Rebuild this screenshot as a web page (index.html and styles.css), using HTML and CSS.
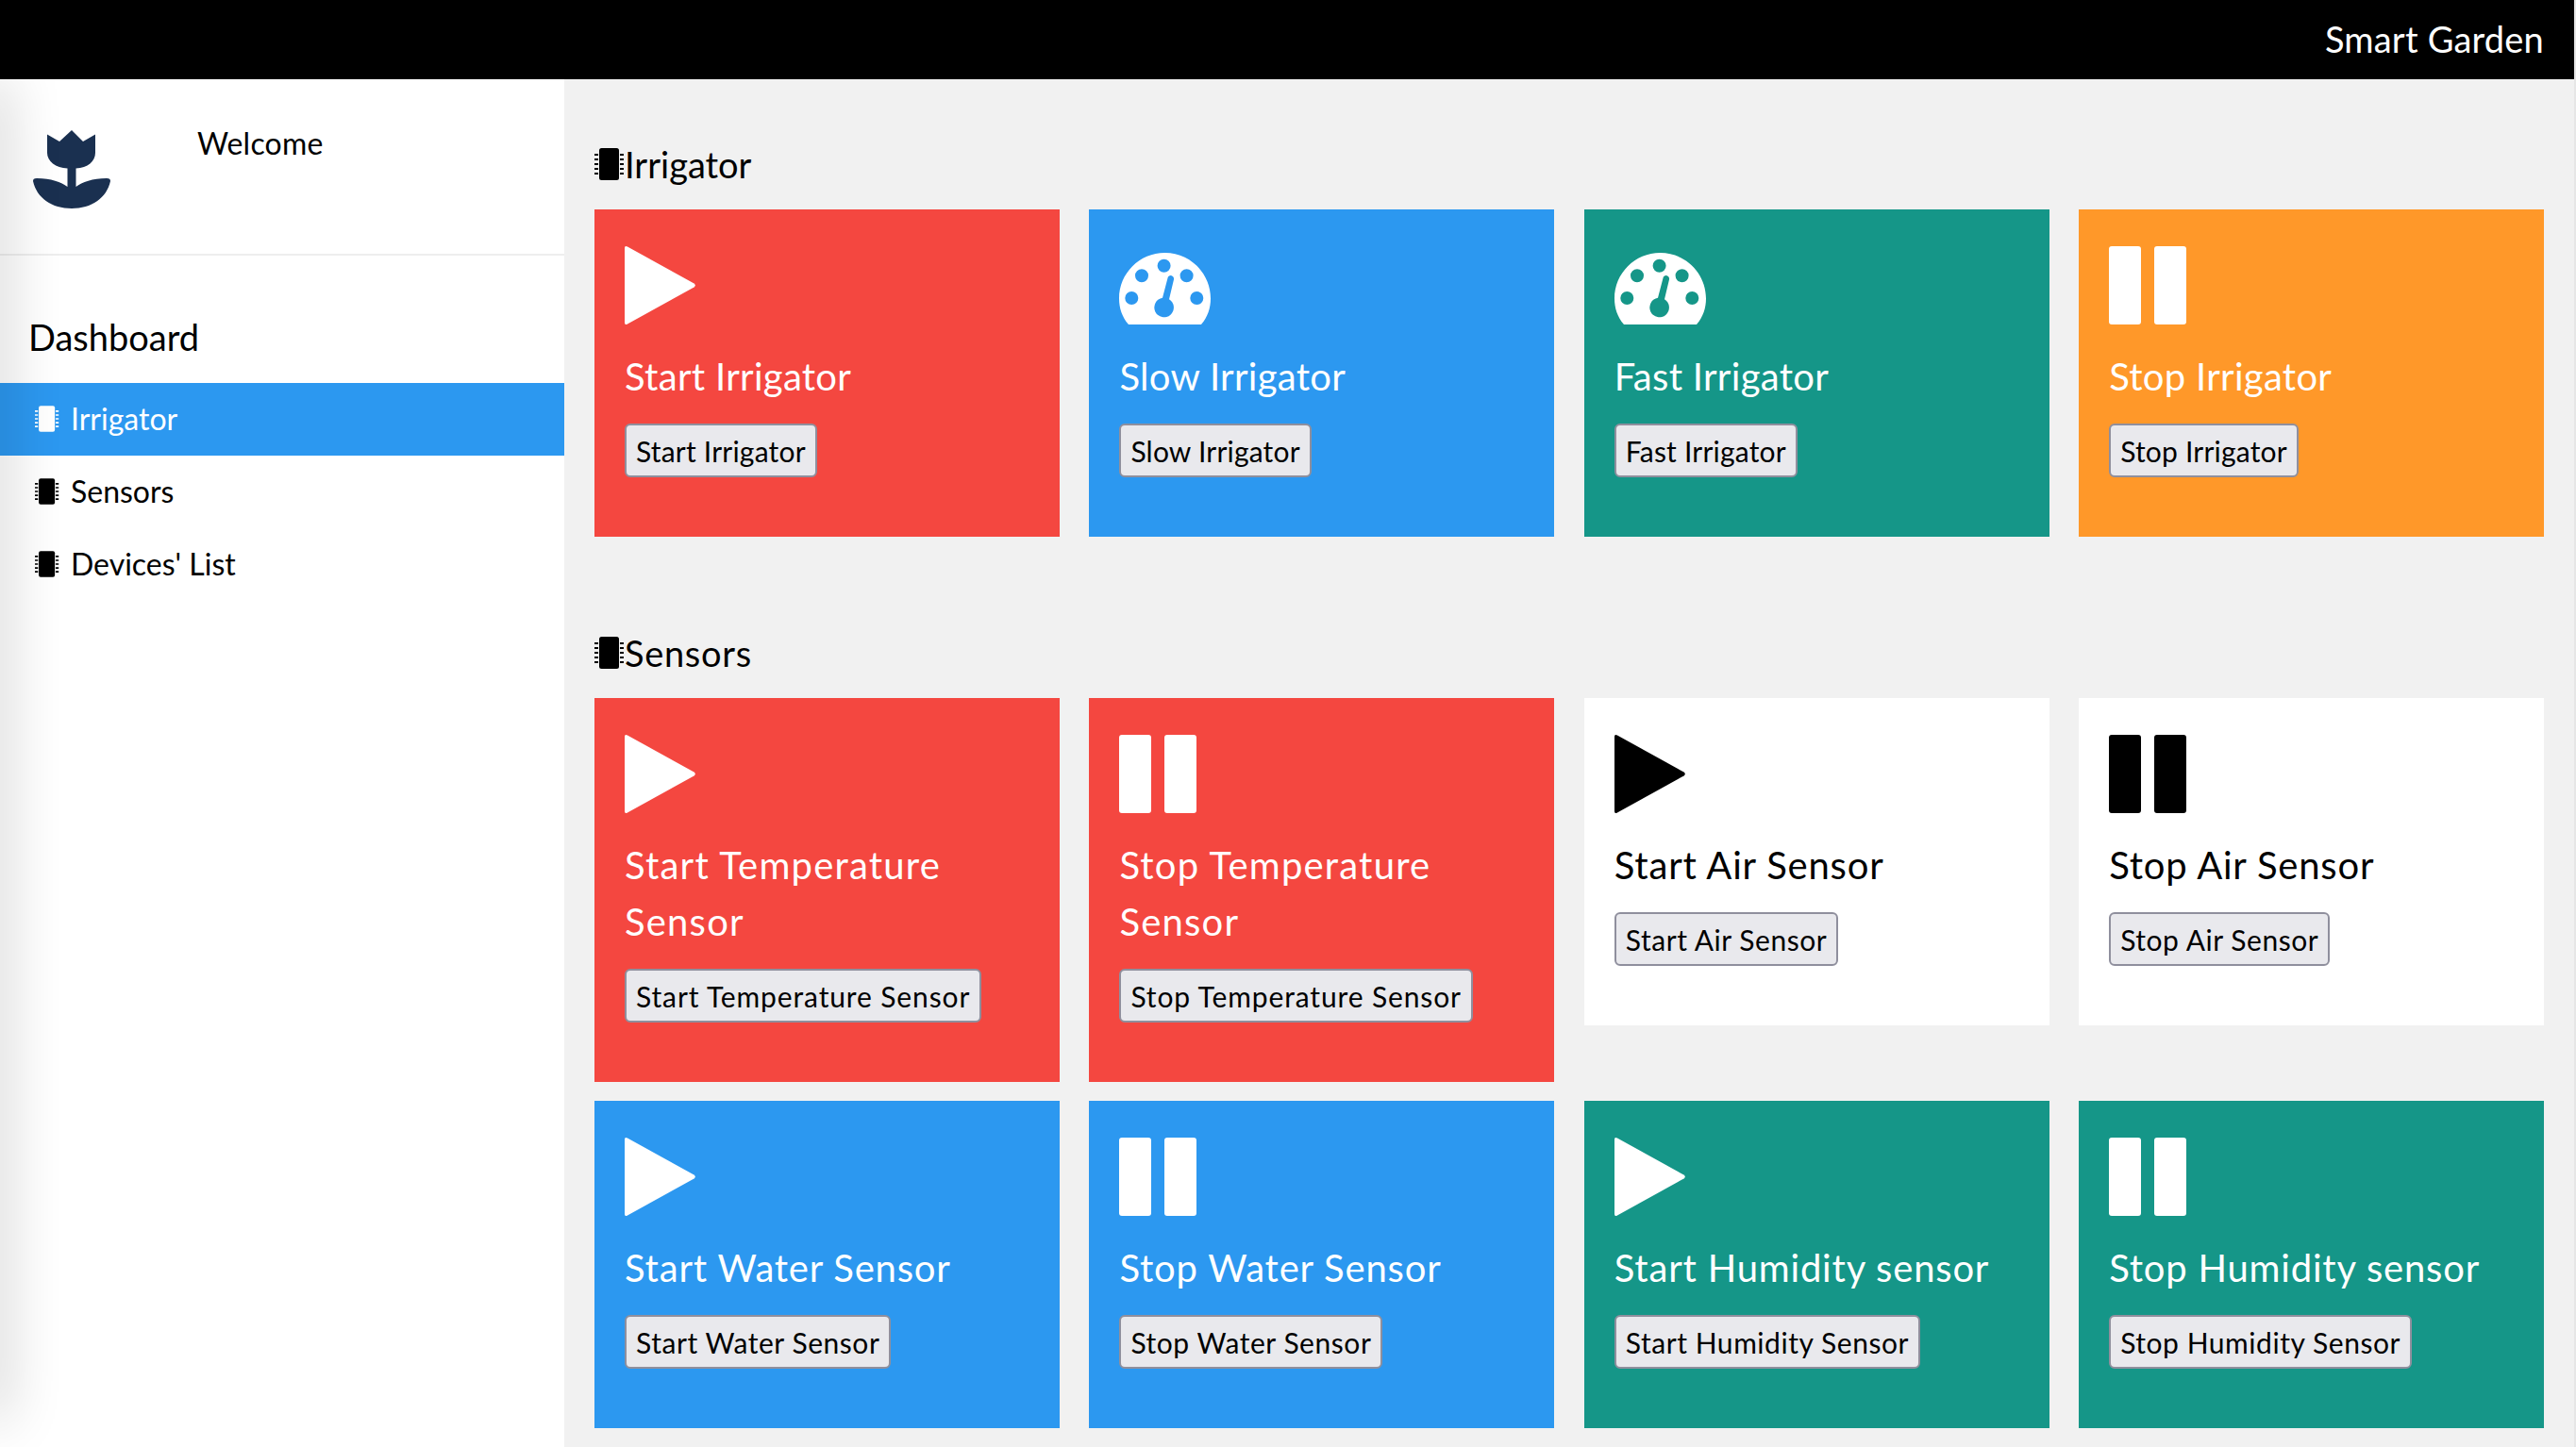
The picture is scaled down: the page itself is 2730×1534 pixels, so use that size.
FILE: index.html
```html
<!DOCTYPE html>
<html lang="en">
<head>
    <meta charset="UTF-8">
    <title>Smart Garden</title>
    <link rel="stylesheet" href="styles.css">
</head>
<body>
<svg class="defs" width="0" height="0">
    <symbol id="chip" viewBox="0 0 32 34">
        <rect x="5" y="0" width="21" height="34" rx="2.5"/>
        <path d="M0 6h4v2H0zM0 11h4v2H0zM0 16h4v2H0zM0 21h4v2H0zM0 26h4v2H0zM27 6h4v2h-4zM27 11h4v2h-4zM27 16h4v2h-4zM27 21h4v2h-4zM27 26h4v2h-4z"/>
    </symbol>
    <symbol id="play" viewBox="0 0 75 83">
        <path d="M0 2Q0-1 3 .5L73.500 39.500Q76 41.500 73.500 43.500L3 82.500Q0 84 0 81Z"/>
    </symbol>
    <symbol id="pause" viewBox="0 0 82 83">
        <rect x="0" y="0" width="34" height="83" rx="3"/>
        <rect x="48" y="0" width="34" height="83" rx="3"/>
    </symbol>
    <symbol id="gauge" viewBox="0 0 97 76">
        <path fill-rule="evenodd" d="M48.500 0C21.700 0 0 21.700 0 48.500c0 9.900 3 19.400 10 27.500h77C94 67.900 97 58.400 97 48.500 97 21.700 75.300 0 48.500 0ZM47.600 6.700a7 7 0 1 1 0 14 7 7 0 0 1 0-14ZM24 17.300a7 7 0 1 1 0 14 7 7 0 0 1 0-14ZM71.600 17.300a7 7 0 1 1 0 14 7 7 0 0 1 0-14ZM13.300 41a7 7 0 1 1 0 14 7 7 0 0 1 0-14ZM82.300 41a7 7 0 1 1 0 14 7 7 0 0 1 0-14ZM55.500 24.200c1.800.4 2.900 2.200 2.500 4L53 49.200A10.300 10.300 0 1 1 46 47.800L51.500 26.700c.4-1.800 2.200-2.900 4-2.500Z"/>
    </symbol>
</svg>

<header class="topbar">Smart Garden</header>

<div class="layout">
    <nav class="sidebar">
        <div class="profile">
            <svg class="logo" viewBox="0 0 82 83">
                <path d="M41 0L53 12L66 4.500V24C66 33 58 40 45.500 40.500V60C52 55 63 51 78 51C81 51 82 52 82 54C78 72 62 83 41 83S4 72 0 54C0 52 1 51 4 51C19 51 30 55 36.500 60V40.500C24 40 15 33 15 24V4.500L28 12Z"/>
            </svg>
            <span class="welcome">Welcome</span>
        </div>
        <h5 class="side-title">Dashboard</h5>
        <a class="side-link active" href="#"><svg class="chip"><use href="#chip"/></svg>Irrigator</a>
        <a class="side-link" href="#"><svg class="chip"><use href="#chip"/></svg>Sensors</a>
        <a class="side-link" href="#"><svg class="chip"><use href="#chip"/></svg>Devices' List</a>
    </nav>

    <main class="main">
        <h3 class="section-title"><svg class="chip"><use href="#chip"/></svg>Irrigator</h3>
        <div class="cards irrigator">
            <div class="card red">
                <svg class="icon play"><use href="#play"/></svg>
                <h4>Start Irrigator</h4>
                <button>Start Irrigator</button>
            </div>
            <div class="card blue">
                <svg class="icon gauge"><use href="#gauge"/></svg>
                <h4>Slow Irrigator</h4>
                <button>Slow Irrigator</button>
            </div>
            <div class="card teal">
                <svg class="icon gauge"><use href="#gauge"/></svg>
                <h4>Fast Irrigator</h4>
                <button>Fast Irrigator</button>
            </div>
            <div class="card orange">
                <svg class="icon pause"><use href="#pause"/></svg>
                <h4>Stop Irrigator</h4>
                <button>Stop Irrigator</button>
            </div>
        </div>

        <h3 class="section-title second"><svg class="chip"><use href="#chip"/></svg>Sensors</h3>
        <div class="cards">
            <div class="card red">
                <svg class="icon play"><use href="#play"/></svg>
                <h4>Start Temperature Sensor</h4>
                <button>Start Temperature Sensor</button>
            </div>
            <div class="card red">
                <svg class="icon pause"><use href="#pause"/></svg>
                <h4>Stop Temperature Sensor</h4>
                <button>Stop Temperature Sensor</button>
            </div>
            <div class="card white">
                <svg class="icon play"><use href="#play"/></svg>
                <h4>Start Air Sensor</h4>
                <button>Start Air Sensor</button>
            </div>
            <div class="card white">
                <svg class="icon pause"><use href="#pause"/></svg>
                <h4>Stop Air Sensor</h4>
                <button>Stop Air Sensor</button>
            </div>
            <div class="card blue">
                <svg class="icon play"><use href="#play"/></svg>
                <h4>Start Water Sensor</h4>
                <button>Start Water Sensor</button>
            </div>
            <div class="card blue">
                <svg class="icon pause"><use href="#pause"/></svg>
                <h4>Stop Water Sensor</h4>
                <button>Stop Water Sensor</button>
            </div>
            <div class="card teal">
                <svg class="icon play"><use href="#play"/></svg>
                <h4>Start Humidity sensor</h4>
                <button>Start Humidity Sensor</button>
            </div>
            <div class="card teal">
                <svg class="icon pause"><use href="#pause"/></svg>
                <h4>Stop Humidity sensor</h4>
                <button>Stop Humidity Sensor</button>
            </div>
        </div>
    </main>
</div>
</body>
</html>
```

FILE: styles.css
```css
html,body{
    height: 100%;
    overflow: hidden;
}
*{
    margin:0;
    padding:0;
    box-sizing: border-box;
}
body{
    background: #f1f1f1;
    border-right: 2px solid #e6e6e6;
    font-family: Lato, "Noto Sans", sans-serif;
    color: #000;
}
.defs{
    position: absolute;
}
.topbar{
    height: 84px;
    padding-right: 32px;
    background: #000;
    color: #fff;
    font-size: 38px;
    letter-spacing: .2px;
    line-height: 82px;
    text-align: right;
}
.layout{
    display: flex;
    height: 1450px;
}
.sidebar{
    position: relative;
    width: 598px;
    flex: none;
    overflow: hidden;
    background: #fff;
}
/* shadow thrown in from the left edge, fades out at the bottom */
.sidebar:after{
    content: "";
    position: absolute;
    left: -20px;
    top: 0;
    bottom: 30px;
    width: 20px;
    box-shadow: 0 0 60px rgba(0,0,0,.32);
}
.profile{
    display: flex;
    height: 187px;
    padding: 54px 0 0 35px;
    border-bottom: 2px solid #eee;
}
.logo{
    width: 82px;
    height: 83px;
    fill: #1a3050;
}
.welcome{
    margin: -8px 0 0 92px;
    font-size: 32px;
    letter-spacing: .2px;
    line-height: 44px;
}
.side-title{
    padding: 61px 0 0 30px;
    height: 135px;
    font-size: 38px;
    font-weight: 400;
    line-height: 50px;
}
.side-link{
    display: flex;
    align-items: center;
    height: 77px;
    padding: 0 0 2px 37px;
    color: #000;
    font-size: 32px;
    text-decoration: none;
}
.side-link .chip{
    width: 26px;
    height: 28px;
    margin-right: 12px;
}
.side-link.active{
    background: #2c98f0;
    color: #fff;
}
.side-link.active .chip{
    fill: #fff;
}
.main{
    flex: 1;
    padding: 73px 32px 0 32px;
}
.section-title{
    display: flex;
    align-items: center;
    height: 34px;
    margin-bottom: 31px;
    font-size: 38px;
    font-weight: 400;
}
.section-title .chip{
    width: 32px;
    height: 34px;
}
.section-title.second{
    margin-top: 106px;
    letter-spacing: .7px;
}
.cards{
    display: grid;
    grid-template-columns: repeat(4, 1fr);
    align-items: start;
    gap: 20px 31.500px;
}
.card{
    padding: 39px 32px 63px;
    color: #fff;
}
.icon{
    display: block;
    height: 83px;
    fill: currentColor;
}
.icon.play{
    width: 75px;
}
.icon.pause{
    width: 82px;
}
.icon.gauge{
    width: 97px;
    height: 76px;
    margin: 7px 0 0;
}
.card h4{
    margin-top: 25px;
    font-size: 40px;
    font-weight: 400;
    letter-spacing: .8px;
    line-height: 60px;
}
.card button{
    display: block;
    height: 57px;
    margin-top: 20px;
    padding: 0 10px;
    background: #e9e9ed;
    border: 2px solid #8f8f9d;
    border-radius: 6px;
    color: #000;
    font-family: inherit;
    font-size: 30px;
    letter-spacing: .55px;
}
.card.red h4{
    letter-spacing: 1.2px;
}
.card.red button{
    letter-spacing: .87px;
}
.irrigator .card h4,
.irrigator .card.red h4{
    letter-spacing: .3px;
}
.irrigator .card button,
.irrigator .card.red button{
    letter-spacing: .2px;
}
.red{
    background: #f44740;
}
.blue{
    background: #2c98f0;
}
.teal{
    background: #159688;
}
.orange{
    background: #ff9829;
}
.white{
    background: #fff;
    color: #000;
}
```
